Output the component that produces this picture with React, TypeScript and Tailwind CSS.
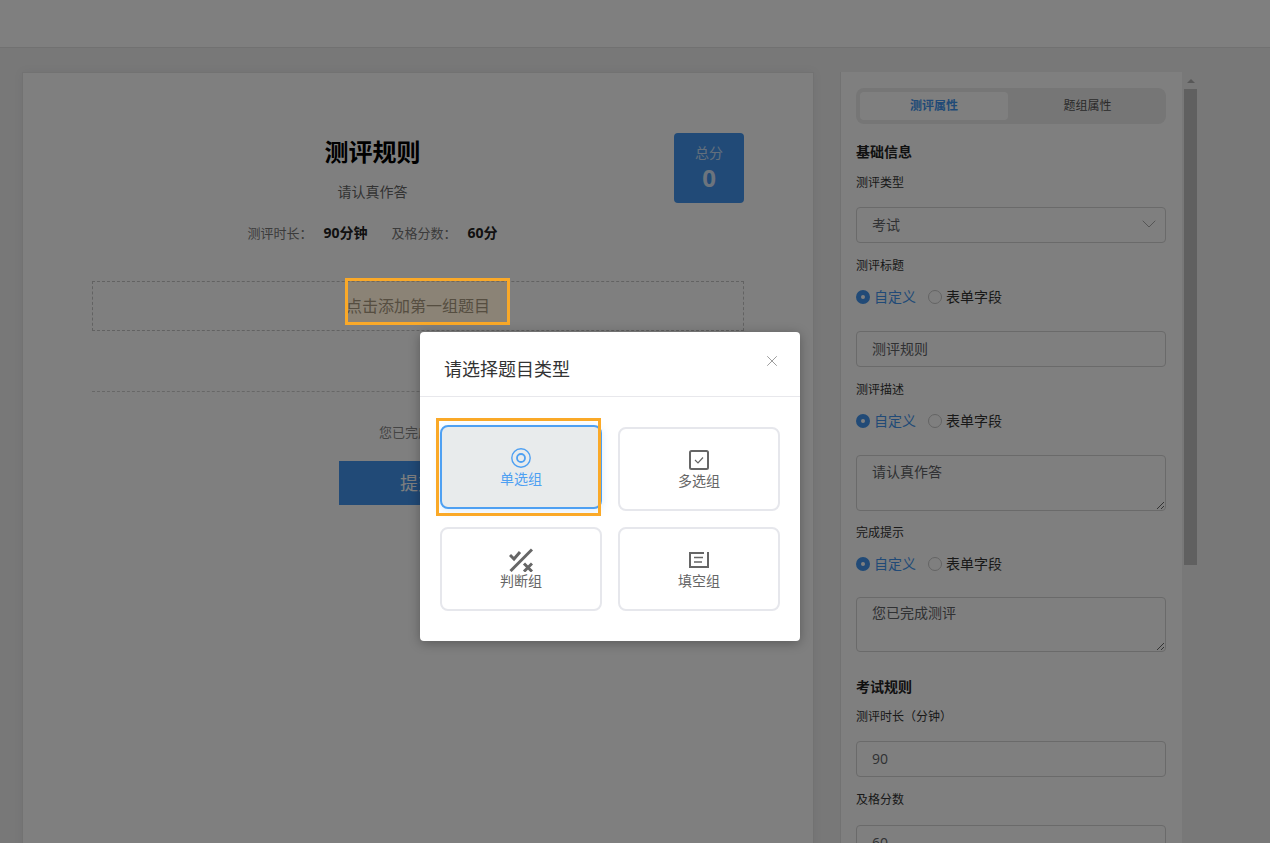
import { ChevronDown, X } from "lucide-react"

const BLUE = "#4ea0f2"

function FieldLabel({ text, className }: { text: string; className: string }) {
  return <div className={`h-5 text-xs leading-[22px] text-[#333] ${className}`}>{text}</div>
}

function SectionTitle({ text, className }: { text: string; className: string }) {
  return <div className={`h-5 text-[14px] font-bold leading-5 text-[#222] ${className}`}>{text}</div>
}

function SourceRadio({ className }: { className: string }) {
  return (
    <div className={`flex h-5 items-center text-[14px] leading-5 ${className}`}>
      <span className="flex h-3.5 w-3.5 items-center justify-center rounded-full bg-[#4295ee]">
        <span className="h-1 w-1 rounded-full bg-white" />
      </span>
      <span className="ml-1 text-[#4295ee]">自定义</span>
      <span className="ml-3 h-3.5 w-3.5 rounded-full border border-[#c8c8c8] bg-white" />
      <span className="ml-1 text-[#333]">表单字段</span>
    </div>
  )
}

function TextInput({ value, className }: { value: string; className: string }) {
  return (
    <input
      readOnly
      value={value}
      className={`block h-9 w-full rounded border border-[#d4d4d4] bg-white px-[15px] pb-[2px] text-[14px] text-[#606266] outline-none ${className}`}
    />
  )
}

function TextBox({ value, className }: { value: string; className: string }) {
  return (
    <textarea
      readOnly
      value={value}
      className={`block w-full rounded border border-[#d4d4d4] bg-white px-[15px] text-[14px] leading-5 text-[#606266] outline-none ${className}`}
    />
  )
}

function RadioIcon() {
  return (
    <svg width="20" height="20" viewBox="0 0 20 20" fill="none" stroke={BLUE} strokeWidth="1.4">
      <circle cx="10" cy="10" r="9.2" />
      <circle cx="10" cy="10" r="4" strokeWidth="1.8" />
    </svg>
  )
}

function CheckIcon() {
  return (
    <svg width="20" height="20" viewBox="0 0 20 20" fill="none" stroke="#666">
      <rect x="1" y="1" width="18" height="18" rx="1.5" strokeWidth="2" />
      <path d="M6 10l3 3 5-5.5" strokeWidth="1.2" />
    </svg>
  )
}

function JudgeIcon() {
  return (
    <svg width="24" height="24" viewBox="0 0 24 24" fill="none" stroke="#666" strokeWidth="3" className="shrink-0">
      <path d="M1 7l4 4 6-7" />
      <path d="M1.5 23L23 1.5" />
      <path d="M15 15.5l8 8M23 15.5l-8 8" />
    </svg>
  )
}

function BlankIcon() {
  return (
    <svg width="20" height="16" viewBox="0 0 20 16" fill="none" stroke="#666" strokeWidth="2">
      <path d="M15 1H1v14h18V0" />
      <path d="M5 5.5h9M5 10h8" strokeWidth="1.4" />
    </svg>
  )
}

function TypeCard({
  label,
  icon,
  active
}: {
  label: string
  icon: React.ReactNode
  active?: boolean
}) {
  return (
    <div
      className={`flex h-[84px] flex-col items-center rounded-lg border-2 pt-[21px] ${
        active
          ? "-translate-y-0.5 border-[#4ea0f2] bg-[#e8ebec] text-[#4ea0f2] shadow-[0_2px_10px_rgba(78,160,242,0.2)]"
          : "border-[#e6e7ec] bg-white text-[#666]"
      }`}
    >
      <div className="flex h-5 items-center justify-center">{icon}</div>
      <div className="mt-px text-[14px] leading-5">{label}</div>
    </div>
  )
}

export default function App() {
  return (
    <div className="relative h-[843px] w-full overflow-hidden bg-[#f0f0f0] font-['Open_Sans','Noto_Sans_CJK_SC',sans-serif]">
      <div className="h-12 border-b border-[#e2e2e2] bg-white" />

      <div className="flex pl-[22px] pt-6">
        <div className="w-[792px] shrink-0 border border-[#e4e4e4] bg-white px-[69px] pt-[60px] shadow-[0_0_10px_rgba(0,0,80,0.05)]">
          <div className="flex justify-between">
            <div className="w-[561px] text-center">
              <div className="mt-px text-2xl font-bold leading-9 text-black">测评规则</div>
              <div className="mt-3 text-[14px] leading-5 text-[#666]">请认真作答</div>
              <div className="mt-[21px] flex justify-center text-[13px] leading-5 text-[#777]">
                <span>测评时长：</span>
                <span className="ml-[11px] text-[14px] font-bold text-[#222]">90分钟</span>
                <span className="ml-6">及格分数：</span>
                <span className="ml-[11px] text-[14px] font-bold text-[#222]">60分</span>
              </div>
            </div>
            <div className="flex h-[70px] w-[70px] flex-col items-center rounded bg-[#4295ee] pt-2.5 text-white">
              <div className="text-[14px] leading-5 opacity-70">总分</div>
              <div className="text-2xl font-bold leading-[30px] opacity-80">0</div>
            </div>
          </div>

          <div className="mt-[38px] flex h-[50px] items-center justify-center border border-dashed border-[#c4c4c4] text-base text-[#888]">
            点击添加第一组题目
          </div>
          <div className="mt-[60px] border-t border-dashed border-[#cfcfcf]" />
          <div className="mt-[30px] text-center text-[13px] leading-5 text-[#888]">您已完成测评</div>
          <div className="mx-auto mt-[19px] flex h-11 w-[158px] items-center justify-center bg-[#4295ee] text-lg text-white">
            提交
          </div>
          <div className="h-[400px]" />
        </div>

        <div className="ml-[26px] w-[342px] shrink-0 border-l border-[#e4e4e4] bg-white pl-[15px] pr-4 pt-4">
          <div className="flex h-9 rounded-lg bg-[#ececec] p-1 text-xs">
            <div className="flex h-7 w-[148px] items-center justify-center rounded bg-white font-bold text-[#4295ee]">
              测评属性
            </div>
            <div className="flex flex-1 items-center justify-center pl-[5px] text-[#555]">题组属性</div>
          </div>

          <SectionTitle text="基础信息" className="mt-[18px]" />
          <FieldLabel text="测评类型" className="mt-2.5" />
          <div className="mt-[15px] flex h-9 items-center justify-between rounded border border-[#d4d4d4] pb-[2px] pl-[15px] pr-1 text-[14px] text-[#606266]">
            考试
            <ChevronDown className="h-6 w-6 text-[#aaa]" strokeWidth={1} />
          </div>

          <FieldLabel text="测评标题" className="mt-3" />
          <SourceRadio className="mt-3" />
          <TextInput value="测评规则" className="mt-6" />

          <FieldLabel text="测评描述" className="mt-3" />
          <SourceRadio className="mt-3" />
          <TextBox value="请认真作答" className="mt-6 h-14 py-[6px]" />

          <FieldLabel text="完成提示" className="mt-[11px]" />
          <SourceRadio className="mt-3" />
          <TextBox value="您已完成测评" className="mt-[23px] h-[55px] py-[5px]" />

          <SectionTitle text="考试规则" className="mt-[25px]" />
          <FieldLabel text="测评时长（分钟）" className="mt-[9px]" />
          <TextInput value="90" className="mt-[15px]" />
          <FieldLabel text="及格分数" className="mt-3" />
          <TextInput value="60" className="mt-4" />
        </div>

        <div className="relative w-[15px] shrink-0 bg-[#f1f1f1]">
          <div className="absolute left-[5px] top-[7px] h-0 w-0 border-x-[4px] border-b-[4px] border-x-transparent border-b-[#b0b0b0]" />
          <div className="ml-0.5 mt-[17px] h-[476px] bg-[#c1c1c1]" />
        </div>
      </div>

      {/* backdrop, guide highlights and the dialog lie over the page */}
      <div className="absolute inset-0 bg-black/50" />
      <div className="absolute left-[345px] top-[278px] h-[47px] w-[165px] border-[3px] border-[#faa928] bg-[#faa928]/10" />

      <div className="absolute left-[420px] top-[332px] w-[380px] rounded-sm bg-white shadow-[0_2px_12px_rgba(0,0,0,0.3)]">
        <div className="relative flex h-[65px] items-center border-b border-[#e8e8ec] pl-6 pt-[10px] text-lg text-[#333]">
          请选择题目类型
          <X className="absolute right-[19px] top-[20px] h-[18px] w-[18px] text-[#888]" strokeWidth={1.1} />
        </div>
        <div className="grid grid-cols-2 gap-4 px-5 py-[30px]">
          <TypeCard label="单选组" icon={<RadioIcon />} active />
          <TypeCard label="多选组" icon={<CheckIcon />} />
          <TypeCard label="判断组" icon={<JudgeIcon />} />
          <TypeCard label="填空组" icon={<BlankIcon />} />
        </div>
      </div>

      <div className="absolute left-[436px] top-[418px] h-[98px] w-[165px] border-[3px] border-[#faa928]" />
    </div>
  )
}
